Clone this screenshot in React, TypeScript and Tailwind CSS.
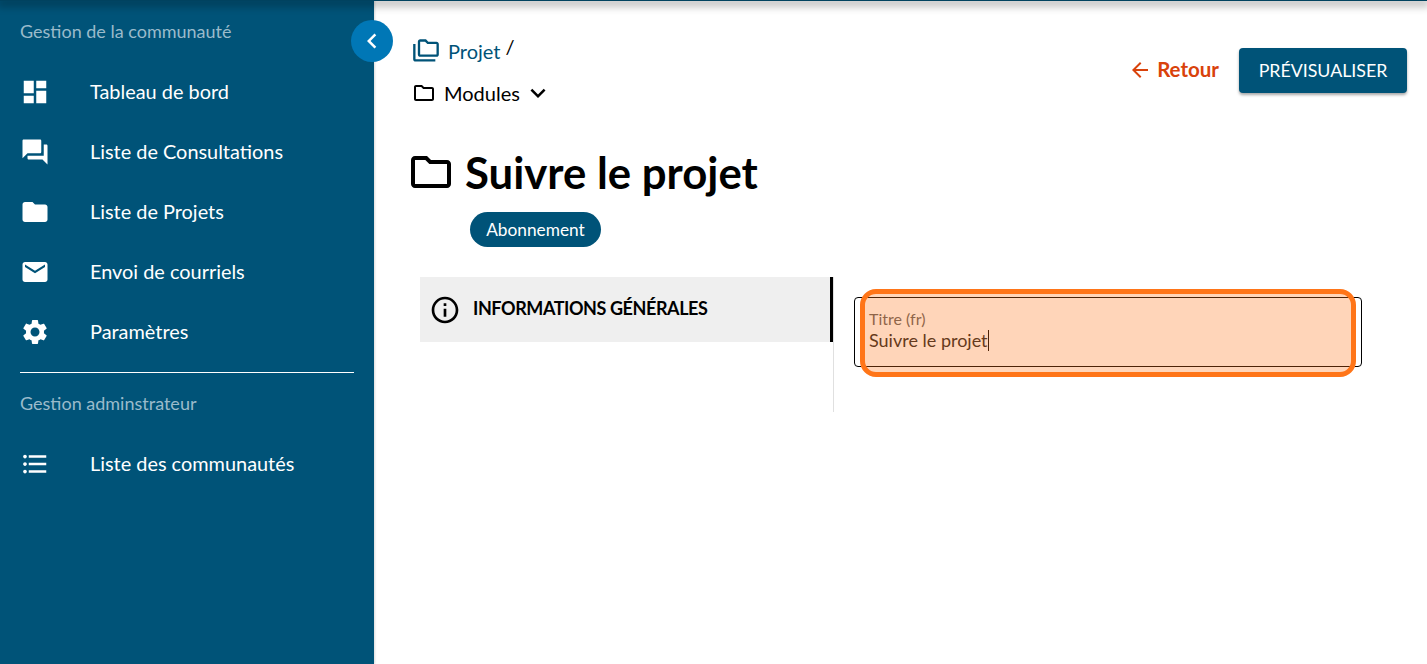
import React from "react";

const P = {
  dashboard: "M3 13h8V3H3v10zm0 8h8v-6H3v6zm10 0h8V11h-8v10zm0-18v6h8V3h-8z",
  forum: "M21 6h-2v9H6v2c0 .55.45 1 1 1h11l4 4V7c0-.55-.45-1-1-1zm-4 6V3c0-.55-.45-1-1-1H3c-.55 0-1 .45-1 1v14l4-4h10c.55 0 1-.45 1-1z",
  folder: "M10 4H4c-1.1 0-1.99.9-1.99 2L2 18c0 1.1.9 2 2 2h16c1.1 0 2-.9 2-2V8c0-1.1-.9-2-2-2h-8l-2-2z",
  email: "M20 4H4c-1.1 0-1.99.9-1.99 2L2 18c0 1.1.9 2 2 2h16c1.1 0 2-.9 2-2V6c0-1.1-.9-2-2-2zm0 4l-8 5-8-5V6l8 5 8-5v2z",
  settings: "M19.14 12.94c.04-.3.06-.61.06-.94 0-.32-.02-.64-.07-.94l2.03-1.58c.18-.14.23-.41.12-.61l-1.92-3.32c-.12-.22-.37-.29-.59-.22l-2.39.96c-.5-.38-1.03-.7-1.62-.94l-.36-2.54c-.04-.24-.24-.41-.48-.41h-3.84c-.24 0-.43.17-.47.41l-.36 2.54c-.59.24-1.13.57-1.62.94l-2.39-.96c-.22-.08-.47 0-.59.22L2.74 8.87c-.12.21-.08.47.12.61l2.03 1.58c-.05.3-.09.63-.09.94s.02.64.07.94l-2.03 1.58c-.18.14-.23.41-.12.61l1.92 3.32c.12.22.37.29.59.22l2.39-.96c.5.38 1.03.7 1.62.94l.36 2.54c.05.24.24.41.48.41h3.84c.24 0 .44-.17.47-.41l.36-2.54c.59-.24 1.13-.56 1.62-.94l2.39.96c.22.08.47 0 .59-.22l1.92-3.32c.12-.22.07-.47-.12-.61l-2.01-1.58zM12 15.6c-1.98 0-3.6-1.62-3.6-3.6s1.62-3.6 3.6-3.6 3.6 1.62 3.6 3.6-1.62 3.6-3.6 3.6z",
  list: "M4 10.5c-.83 0-1.5.67-1.5 1.5s.67 1.5 1.5 1.5 1.5-.67 1.5-1.5-.67-1.5-1.5-1.5zm0-6c-.83 0-1.5.67-1.5 1.5S3.17 7.5 4 7.5 5.5 6.83 5.5 6 4.83 4.5 4 4.5zm0 12c-.83 0-1.5.68-1.5 1.5s.68 1.5 1.5 1.5 1.5-.68 1.5-1.5-.67-1.5-1.5-1.5zM7 19h14v-2H7v2zm0-6h14v-2H7v2zm0-8v2h14V5H7z",
  folderOutline: "M9.17 6l2 2H20v10H4V6h5.17M10 4H4c-1.1 0-1.99.9-1.99 2L2 18c0 1.1.9 2 2 2h16c1.1 0 2-.9 2-2V8c0-1.1-.9-2-2-2h-8l-2-2z",
  folderCopy: "M3 19h17v2H3c-1.1 0-2-.9-2-2V6h2v13zM23 6v9c0 1.1-.9 2-2 2H7c-1.1 0-2-.9-2-2l.01-11C5.01 2.9 5.9 2 7 2h5l2 2h7c1.1 0 2 .9 2 2zM7 15h14V6h-7.83l-2-2H7v11z",
  info: "M11 7h2v2h-2zm0 4h2v6h-2zm1-9C6.48 2 2 6.48 2 12s4.48 10 10 10 10-4.48 10-10S17.52 2 12 2zm0 18c-4.41 0-8-3.59-8-8s3.59-8 8-8 8 3.59 8 8-3.59 8-8 8z",
  arrowBack: "M20 11H7.83l5.59-5.59L12 4l-8 8 8 8 1.41-1.41L7.83 13H20v-2z",
  expand: "M16.59 8.59 12 13.17 7.41 8.59 6 10l6 6 6-6z",
  chevronLeft: "M15.41 7.41 14 6l-6 6 6 6 1.41-1.41L10.83 12z",
};

function Icon({ d, className }: { d: string; className: string }) {
  return (
    <svg viewBox="0 0 24 24" fill="currentColor" className={className} aria-hidden="true">
      <path d={d} />
    </svg>
  );
}

function NavItem({ icon, label }: { icon: string; label: string }) {
  return (
    <div className="flex h-[60px] items-center">
      <div className="w-[70px] shrink-0">
        <Icon d={icon} className="h-[30px] w-[30px]" />
      </div>
      <span className="text-[19.9px] leading-none">{label}</span>
    </div>
  );
}

export default function App() {
  return (
    <div className="relative flex h-[664px] w-full overflow-hidden bg-white font-['Lato','Liberation_Sans',sans-serif] text-black">
      {/* top shadow */}
      <div className="absolute inset-x-0 top-0 z-10 h-px bg-[#00425f] shadow-[0_2px_8px_3px_rgba(0,0,0,0.3)]" />

      {/* Sidebar */}
      <aside className="w-[374px] shrink-0 bg-[#005378] px-5 pt-[20px] text-white shadow-[1px_0_2px_rgba(0,0,0,0.15)]">
        <div className="h-[23px] text-[18px] leading-[23px] text-[#9abbcb]">Gestion de la communauté</div>
        <nav className="mt-[19px]">
          <NavItem icon={P.dashboard} label="Tableau de bord" />
          <NavItem icon={P.forum} label="Liste de Consultations" />
          <NavItem icon={P.folder} label="Liste de Projets" />
          <NavItem icon={P.email} label="Envoi de courriels" />
          <NavItem icon={P.settings} label="Paramètres" />
        </nav>
        <div className="mt-[10px] h-px bg-white" />
        <div className="mt-[19px] h-[23px] text-[18px] leading-[23px] text-[#9abbcb]">Gestion adminstrateur</div>
        <div className="mt-[19px]">
          <NavItem icon={P.list} label="Liste des communautés" />
        </div>
      </aside>

      {/* Collapse toggle */}
      <button className="absolute left-[351px] top-[20px] z-20 flex h-[42px] w-[42px] items-center justify-center rounded-full bg-[#0077b6] text-white">
        <Icon d={P.chevronLeft} className="h-[30px] w-[30px]" />
      </button>

      {/* Main */}
      <main className="min-w-0 flex-1 pl-[38px] pr-[20px] pt-[36px]">
        <header className="flex items-start justify-between">
          <div>
            <div className="flex h-[30px] items-center text-[#005378]">
              <Icon d={P.folderCopy} className="h-[28px] w-[28px]" />
              <span className="ml-[8px] text-[20px] leading-none">Projet</span>
              <span className="ml-[5px] -translate-y-[5px] text-[20px] leading-none text-black">/</span>
            </div>
            <div className="mt-[12px] flex h-[30px] items-center">
              <Icon d={P.folderOutline} className="h-[24px] w-[24px]" />
              <span className="ml-[8px] text-[20px] leading-none">Modules</span>
              <Icon d={P.expand} className="ml-[3px] h-[30px] w-[30px]" />
            </div>
          </div>
          <div className="mt-[12px] flex items-center">
            <button className="mb-[2px] flex items-center text-[20.5px] font-bold leading-none text-[#d9420b]">
              <Icon d={P.arrowBack} className="h-[24px] w-[24px]" />
              <span className="ml-[5px]">Retour</span>
            </button>
            <button className="ml-[20px] flex h-[45px] w-[168px] items-center justify-center rounded-[4px] bg-[#005378] text-[17.8px] text-white shadow-[0_2px_3px_rgba(0,0,0,0.35)]">
              PRÉVISUALISER
            </button>
          </div>
        </header>

        <div className="mt-[36px] flex items-center">
          <Icon d={P.folderOutline} className="-ml-[5px] h-[48px] w-[48px]" />
          <h1 className="ml-[10px] text-[43.7px] font-bold leading-[56px]">Suivre le projet</h1>
        </div>

        <div className="ml-[58px] mt-[12px] flex h-[35px] w-[131px] items-center justify-center rounded-full bg-[#005378] text-[17.3px] text-white">
          Abonnement
        </div>

        <section className="ml-[8px] mt-[30px] flex">
          <div className="h-[135px] w-[414px] shrink-0 border-r border-[#e0e0e0]">
            <div className="flex h-[65px] items-center border-r-[3px] border-black bg-[#efefef] pl-[9px]">
              <Icon d={P.info} className="h-[32px] w-[32px]" />
              <span className="ml-[12px] -translate-y-[2px] text-[18px] font-bold leading-none tracking-[-0.42px]">INFORMATIONS GÉNÉRALES</span>
            </div>
          </div>
          <div className="ml-[20px] mt-[20px]">
            <div className="relative h-[70px] w-[508px] rounded-[4px] border border-black px-[14px] pt-[12px]">
              <div className="text-[16px] leading-[17px] text-[#5f5f5f]">Titre (fr)</div>
              <div className="mt-[1px] flex h-[24px] items-center text-[18px] leading-none text-[#222222]">
                <span>Suivre le projet</span>
                <span className="h-[21px] w-px bg-black" />
              </div>
              {/* highlight annotation */}
              <div className="absolute left-[5px] top-[-9px] h-[88px] w-[496px] rounded-[16px] border-[5px] border-[#ff7518] bg-[#ff7518]/30" />
            </div>
          </div>
        </section>
      </main>
    </div>
  );
}
